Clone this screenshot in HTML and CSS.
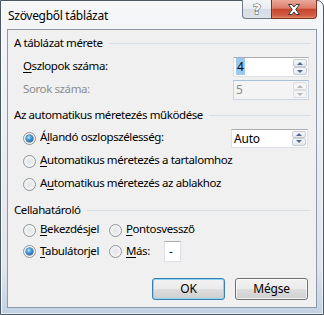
FILE: index.html
```html
<!DOCTYPE html>
<html lang="hu">
<head>
<meta charset="utf-8">
<title>Szövegből táblázat</title>
<link rel="stylesheet" href="styles.css">
</head>
<body>
<div class="window">
  <div class="titlebar">
    <span class="title">Szövegből táblázat</span>
    <div class="caption-btns">
      <div class="cap-btn help"><span class="help-glyph">?</span></div>
      <div class="cap-btn close">
        <svg width="12" height="11" viewBox="0 0 12 11"><path d="M0.5 0.5 H4 L6 3 L8 0.5 H11.5 L7.8 5.5 L11.5 10.5 H8 L6 8 L4 10.5 H0.5 L4.2 5.5 Z" fill="#fff" stroke="#3a3a3a" stroke-width="1" stroke-linejoin="round"/></svg>
      </div>
    </div>
  </div>
  <div class="client">
    <div class="heading h1"><span>A táblázat mérete</span><div class="rule"></div></div>
    <div class="row r-first">
      <span class="label"><u>O</u>szlopok száma:</span>
      <div class="spin">
        <div class="spin-text"><span class="sel">4</span></div>
        <div class="spin-btns"><div class="sb up"><i class="tri up-tri"></i></div><div class="sb down"><i class="tri down-tri"></i></div></div>
      </div>
    </div>
    <div class="row r-second">
      <span class="label disabled">Sorok száma:</span>
      <div class="spin spin-disabled">
        <div class="spin-text">5</div>
        <div class="spin-btns"><div class="sb up"><i class="tri up-tri"></i></div><div class="sb down"><i class="tri down-tri"></i></div></div>
      </div>
    </div>

    <div class="heading h2"><span>Az automatikus méretezés működése</span><div class="rule"></div></div>
    <div class="row r-radio1">
      <span class="radio checked"></span>
      <span class="rlabel">Á<u>l</u>landó oszlopszélesség:</span>
      <div class="spin spin-auto">
        <div class="spin-text">Auto</div>
        <div class="spin-btns"><div class="sb up"><i class="tri up-tri"></i></div><div class="sb down"><i class="tri down-tri"></i></div></div>
      </div>
    </div>
    <div class="row r-radio">
      <span class="radio"></span>
      <span class="rlabel"><u>A</u>utomatikus méretezés a tartalomhoz</span>
    </div>
    <div class="row r-radio">
      <span class="radio"></span>
      <span class="rlabel">A<u>u</u>tomatikus méretezés az ablakhoz</span>
    </div>

    <div class="heading h3"><span>Cellahatároló</span><div class="rule"></div></div>
    <div class="row r-sep1">
      <div class="col1"><span class="radio"></span><span class="rlabel"><u>B</u>ekezdésjel</span></div>
      <div class="col2"><span class="radio"></span><span class="rlabel"><u>P</u>ontosvessző</span></div>
    </div>
    <div class="row r-sep2">
      <div class="col1"><span class="radio checked"></span><span class="rlabel"><u>T</u>abulátorjel</span></div>
      <div class="col2"><span class="radio"></span><span class="rlabel"><u>M</u>ás:</span><div class="other">-</div></div>
    </div>

    <div class="buttons">
      <div class="btn default">OK</div>
      <div class="btn">Mégse</div>
    </div>
  </div>
</div>
</body>
</html>
```
FILE: styles.css
```css
* { box-sizing: border-box; }
html, body { margin: 0; padding: 0; }
body {
  width: 324px;
  height: 315px;
  overflow: hidden;
  background: #fff;
  font-family: "Segoe UI", "Noto Sans", "Open Sans", sans-serif;
  font-size: 11.5px;
  letter-spacing: -0.4px;
  color: #000;
}
.window {
  width: 324px;
  height: 315px;
  display: flex;
  flex-direction: column;
  border: 1px solid #4b5663;
  border-top-right-radius: 7px;
  padding: 0 6px 6px 6px;
  background:
    linear-gradient(to bottom, rgba(255,255,255,0) 85%, rgba(170,195,225,0.55) 100%),
    linear-gradient(to bottom, #f6f7f9 0%, #eceff3 40%, #dde3ea 100%);
  box-shadow: inset 1px 1px 0 rgba(255,255,255,0.8), inset -1px -1px 0 rgba(255,255,255,0.6);
}
.titlebar {
  height: 28px;
  display: flex;
  align-items: flex-start;
  flex: none;
}
.title {
  margin-left: 1px;
  margin-top: 7px;
  font-size: 12px;
  letter-spacing: -0.3px;
  line-height: 16px;
  color: #000;
}
.caption-btns {
  margin-left: auto;
  margin-top: -1px;
  display: flex;
  height: 19px;
}
.cap-btn {
  height: 19px;
  display: flex;
  align-items: center;
  justify-content: center;
  border: 1px solid #6f7c8c;
  border-top: none;
}
.help {
  width: 29px;
  border-right: none;
  border-bottom-left-radius: 4px;
  background: linear-gradient(to bottom, #f3f5f7 0%, #e8ecf0 50%, #d4dbe3 51%, #dde3ea 100%);
}
.help-glyph {
  font-family: "DejaVu Sans", sans-serif;
  font-weight: bold;
  font-size: 14px;
  line-height: 14px;
  letter-spacing: 0;
  color: #fff;
  -webkit-text-stroke: 1px #4a4a4a;
  paint-order: stroke fill;
  margin-top: -1px;
}
.close {
  width: 46px;
  border-color: #7a2f22;
  border-bottom-right-radius: 4px;
  background: linear-gradient(to bottom, #e9a99c 0%, #dd7d6a 45%, #c9452d 52%, #d6644c 100%);
  box-shadow: inset 0 -1px 2px rgba(255,200,150,0.5);
}
.client {
  flex: 1;
  background: #f0f0f0;
  border: 1px solid #8e9aa8;
  padding: 0 5px 0 6px;
  display: flex;
  flex-direction: column;
}
.heading {
  display: flex;
  align-items: center;
  height: 16px;
  flex: none;
}
.heading span { line-height: 16px; }
.rule {
  flex: 1;
  height: 1px;
  background: #d5dfe5;
  margin-left: 6px;
  margin-top: 1px;
}
.h1 { margin-top: 5px; }
.h2 { margin-top: 7px; }
.h3 { margin-top: 8px; }
.row {
  display: flex;
  align-items: center;
  height: 20px;
  flex: none;
  padding-left: 9px;
}
.r-first { margin-top: 6px; }
.r-second { margin-top: 3px; }
.r-radio1 { margin-top: 5px; }
.r-radio { margin-top: 3px; }
.r-sep1 { margin-top: 2px; }
.r-sep2 { margin-top: 1px; height: 21px; }
.label { line-height: 16px; margin-top: -2px; }
.disabled { color: #8d8d8d; }
u { text-decoration: underline; text-underline-offset: 2px; }
.spin {
  margin-left: auto;
  margin-right: 2px;
  width: 76px;
  height: 20px;
  background: #fff;
  border: 1px solid #dde1e7;
  border-top-color: #abadb3;
  display: flex;
  padding: 1px;
}
.spin-auto { width: 77px; margin-right: 3px; height: 19px; }
.spin-text {
  flex: 1;
  padding-left: 1px;
  line-height: 16px;
  font-size: 12px;
  letter-spacing: -0.2px;
}
.sel { background: #99c9ef; padding: 0 1px; }
.spin-disabled { background: #f4f4f4; border-color: #c9d6e6; border-top-color: #a8c0dc; }
.spin-disabled .spin-text { color: #8d8d8d; }
.spin-btns {
  width: 14px;
  display: flex;
  flex-direction: column;
}
.sb {
  flex: 1;
  border: 1px solid #c7ccd3;
  border-radius: 2px;
  background: linear-gradient(to bottom, #f7f8fa, #e3e7ec);
  display: flex;
  align-items: center;
  justify-content: center;
}
.spin-disabled .sb { border-color: #dadde1; background: #f4f4f4; }
.tri { width: 0; height: 0; border-left: 3px solid transparent; border-right: 3px solid transparent; }
.up-tri { border-bottom: 3px solid #4c6a91; }
.down-tri { border-top: 3px solid #4c6a91; }
.spin-disabled .up-tri { border-bottom-color: #b7b7b7; }
.spin-disabled .down-tri { border-top-color: #b7b7b7; }
.radio {
  width: 13px;
  height: 13px;
  border-radius: 50%;
  flex: none;
  border: 1px solid #8f9498;
  background: radial-gradient(circle at 50% 50%, #e2e3e4 0%, #eceeef 45%, #ffffff 100%);
  position: relative;
}
.radio.checked::after {
  content: "";
  position: absolute;
  left: 2px; top: 2px;
  width: 7px; height: 7px;
  border-radius: 50%;
  background: radial-gradient(circle at 40% 35%, #bfe7ff 0%, #4ba3e0 35%, #1f5a98 80%);
  box-shadow: 0 0 0 0.5px #1d4f7e;
}
.rlabel { margin-left: 4px; line-height: 16px; margin-top: -2px; }
.col1 { width: 86px; display: flex; align-items: center; flex: none; }
.col2 { display: flex; align-items: center; }
.other {
  margin-left: 14px;
  width: 17px;
  height: 21px;
  background: #fff;
  border: 1px solid #dde1e7;
  border-top-color: #abadb3;
  padding-left: 4px;
  line-height: 17px;
}
.buttons {
  display: flex;
  justify-content: flex-end;
  gap: 10px;
  margin-top: 16px;
  padding-right: 3px;
}
.btn {
  width: 73px;
  height: 22px;
  border: 1px solid #707070;
  border-radius: 3px;
  background: linear-gradient(to bottom, #f2f2f2 0%, #ebebeb 50%, #dddddd 51%, #cfcfcf 100%);
  box-shadow: inset 0 0 0 1px rgba(255,255,255,0.7);
  display: flex;
  align-items: center;
  justify-content: center;
  line-height: 16px;
  font-size: 12px;
  letter-spacing: -0.2px;
}
.btn.default {
  border-color: #3c7fb1;
  box-shadow: inset 0 0 0 1px #8ad4f5;
}
```
